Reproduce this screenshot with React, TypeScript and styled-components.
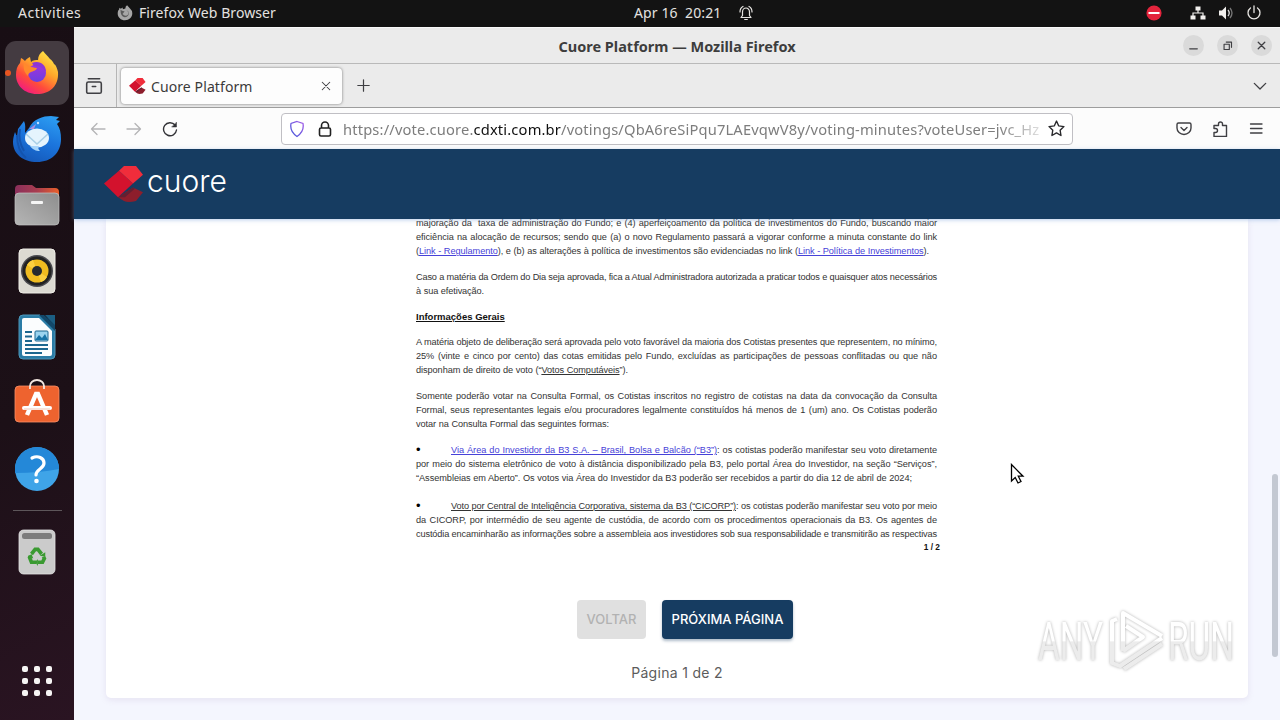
import React, { FC, ReactNode } from "react";
import styled, { createGlobalStyle } from "styled-components";

const GlobalStyle = createGlobalStyle`
  * {
    box-sizing: border-box;
  }
  body {
    margin: 0;
    overflow: hidden;
    font-family: "Noto Sans", "Open Sans", sans-serif;
  }
  svg {
    display: block;
    flex: none;
  }
`;

const Desktop = styled.div`
  position: relative;
  display: flex;
  flex-direction: column;
  width: 1280px;
  height: 720px;
  overflow: hidden;
  background-color: #1b1016;
`;

/* ---------- system bar ---------- */

const SystemBar = styled.header`
  display: grid;
  grid-template-columns: 634px 1fr auto;
  align-items: center;
  height: 27px;
  flex: none;
  padding-right: 18px;
  padding-bottom: 1px;
  background-color: #131313;
`;

const BarGroup = styled.div<{ $gap?: number; $left?: number }>`
  display: flex;
  align-items: center;
  gap: ${({ $gap }) => $gap || 0}px;
  padding-left: ${({ $left }) => $left || 0}px;
`;

const BarText = styled.span<{ $width: number; $spacing?: number }>`
  width: ${({ $width }) => $width}px;
  font-size: 14px;
  line-height: 26px;
  letter-spacing: ${({ $spacing }) => $spacing || 0}px;
  white-space: pre;
  color: #e4e2e0;
`;

/* ---------- dock ---------- */

const Workspace = styled.div`
  display: flex;
  flex: 1;
  min-height: 0;
`;

const Dock = styled.nav`
  display: flex;
  flex-direction: column;
  align-items: center;
  gap: 2px;
  width: 74px;
  flex: none;
  padding: 14px 0 7px;
  background: linear-gradient(155deg, #180e14 0%, #1c1017 55%, #2a1422 100%);
`;

const DockTile = styled.div<{ $active?: boolean }>`
  position: relative;
  display: flex;
  align-items: center;
  justify-content: center;
  width: 64px;
  height: 64px;
  flex: none;
  border-radius: 11px;
  background-color: ${({ $active }) => ($active ? "#443b41" : "transparent")};
`;

const RunningDot = styled.i`
  position: absolute;
  left: 0;
  top: 29px;
  width: 6px;
  height: 6px;
  border-radius: 50%;
  background-color: #e95420;
`;

const DockDivider = styled.hr`
  width: 49px;
  height: 1px;
  margin: 7px 0;
  border: 0;
  background-color: #5d565a;
`;

const AppsButton = styled.div`
  display: grid;
  grid-template-columns: repeat(3, 6px);
  gap: 6px;
  margin: auto 0 17px;
`;

const AppsDot = styled.i`
  width: 6px;
  height: 6px;
  border-radius: 2px;
  background-color: #f6f5f4;
`;

/* ---------- browser ---------- */

const Browser = styled.section`
  display: flex;
  flex-direction: column;
  flex: 1;
  min-width: 0;
  background-color: #ebebeb;
`;

const TitleBar = styled.div`
  display: grid;
  grid-template-columns: 1fr auto 1fr;
  align-items: center;
  height: 37px;
  flex: none;
  padding: 0 8px;
  border-bottom: 1px solid #b9b9b9;
  border-top: 1px solid #f8f8f8;
`;

const WindowTitle = styled.h1`
  grid-column: 2;
  margin: 0;
  font-size: 14.5px;
  font-weight: 700;
  color: #3d3d3d;
`;

const WindowButtons = styled.div`
  display: flex;
  justify-content: flex-end;
  gap: 13px;
`;

const WindowButton = styled.span`
  display: flex;
  align-items: center;
  justify-content: center;
  width: 21px;
  height: 21px;
  border-radius: 50%;
  background-color: #dadada;
`;

const TabStrip = styled.div`
  display: flex;
  align-items: center;
  height: 44px;
  flex: none;
  padding-right: 13px;
  border-bottom: 1px solid #9d9d9d;
`;

const TabHistory = styled.div`
  display: flex;
  align-items: center;
  padding: 0 13px 0 11px;
  height: 43px;
  width: 43px;
  border-right: 1px solid #b5b5b5;
`;

const Tab = styled.div`
  display: flex;
  align-items: center;
  width: 221px;
  height: 36px;
  margin-left: 4px;
  margin-right: 15px;
  padding: 0 10px 0 8px;
  border-radius: 4px;
  background-color: #fdfdfd;
  box-shadow: 0 0 3px rgba(0, 0, 0, 0.5);
`;

const TabTitle = styled.span`
  flex: 1;
  margin-left: 5px;
  padding-top: 1px;
  font-size: 14px;
  letter-spacing: 0.1px;
  color: #3a3a3a;
`;

const Spacer = styled.div`
  flex: 1;
`;

const Toolbar = styled.div`
  display: flex;
  align-items: center;
  height: 41px;
  flex: none;
  padding: 0 16px 0 16px;
  background-color: #fcfcfc;
`;

const NavButtons = styled.div`
  display: flex;
  gap: 20px;
  width: 191px;
`;

const AddressBar = styled.div`
  display: flex;
  align-items: center;
  width: 792px;
  height: 32px;
  padding: 0 7px;
  border: 1px solid #c0bfc4;
  border-radius: 4px;
  background-color: #fff;
`;

const Url = styled.div`
  width: 698px;
  margin-left: 10px;
  overflow: hidden;
  white-space: nowrap;
  font-size: 14.7px;
  letter-spacing: 0.16px;
  color: #7d7d7d;
  mask-image: linear-gradient(to right, #000 655px, transparent 710px);
`;

const UrlDomain = styled.span`
  color: #101010;
`;

const ToolButtons = styled.div`
  display: flex;
  gap: 20px;
`;

/* ---------- page ---------- */

const Page = styled.main`
  position: relative;
  display: flex;
  flex-direction: column;
  flex: 1;
  min-height: 0;
  background-color: #f4f6fe;
`;

const SiteHeader = styled.div`
  z-index: 1;
  display: flex;
  align-items: center;
  height: 70px;
  flex: none;
  padding-left: 30px;
  background-color: #163c61;
  box-shadow: 0 1px 4px rgba(120, 160, 215, 0.5);
`;

const Card = styled.article`
  display: flex;
  flex-direction: column;
  align-items: center;
  width: 1142px;
  height: 479px;
  margin-left: 32px;
  border-radius: 0 0 5px 5px;
  background-color: #fff;
  box-shadow: 0 2px 6px rgba(160, 130, 180, 0.16);
`;

const Minutes = styled.div`
  width: 522px;
  margin-top: -3px;
  font-family: "Liberation Sans", Arial, sans-serif;
  font-size: 9.2px;
  line-height: 14px;
  color: #333;
`;

const Paragraph = styled.div<{ $gap?: number }>`
  margin-bottom: ${({ $gap }) => $gap ?? 12}px;
`;

const Line = styled.div<{ $width?: number; $tight?: number }>`
  width: ${({ $width }) => $width || 521}px;
  height: 14px;
  letter-spacing: ${({ $tight }) => -($tight ?? 0.05)}px;
  white-space: nowrap;
  text-align: justify;
  text-align-last: justify;
`;

const Heading = styled.h2`
  width: 90px;
  height: 14px;
  margin: 0 0 11px;
  font-size: 9.5px;
  font-weight: 700;
  white-space: nowrap;
  text-decoration: underline;
  color: #111;
`;

const DocLink = styled.a`
  color: #4742d8;
  text-decoration: underline;
`;

const Term = styled.u`
  text-decoration-thickness: 1px;
`;

const BulletRow = styled.div`
  display: flex;
`;

const Bullet = styled.span`
  width: 35px;
  height: 14px;
  font-size: 13px;
  color: #000;
`;

const PageNumber = styled.div`
  margin-right: -2px;
  height: 12px;
  line-height: 12px;
  font-size: 8.3px;
  font-weight: 700;
  text-align: right;
  color: #111;
`;

const Pager = styled.div`
  display: flex;
  gap: 16px;
  margin-top: 47px;
  margin-left: 16px;
`;

const PagerButton = styled.button<{ $width: number; $muted?: boolean }>`
  width: ${({ $width }) => $width}px;
  height: 39px;
  padding: 0 0 2px;
  border: 0;
  border-radius: 4px;
  font-family: Inter, "Noto Sans", sans-serif;
  font-size: 13px;
  font-weight: 500;
  white-space: nowrap;
  color: ${({ $muted }) => ($muted ? "#b2b2b2" : "#fff")};
  background-color: ${({ $muted }) => ($muted ? "#e0e0e0" : "#163c61")};
  box-shadow: ${({ $muted }) =>
    $muted ? "none" : "0 2px 3px rgba(22, 60, 97, 0.35)"};
`;

const PageStatus = styled.p`
  margin: 24px 0 0;
  font-family: Inter, "Noto Sans", sans-serif;
  font-size: 14px;
  line-height: 20px;
  letter-spacing: 0.3px;
  color: #5c5c5c;
`;

const ScrollThumb = styled.div`
  position: absolute;
  right: 2px;
  top: 325px;
  width: 6px;
  height: 183px;
  border-radius: 3px;
  background-color: #c3c8d2;
`;

const Watermark = styled.svg`
  position: absolute;
  left: 1030px;
  top: 601px;
  filter: drop-shadow(0 0 1.5px rgba(0, 0, 0, 0.3));
`;

const Pointer = styled.svg`
  position: absolute;
  left: 1010px;
  top: 463px;
`;

/* ---------- icons ---------- */

interface StrokeProps {
  size?: number;
  color?: string;
  weight?: number;
  children: ReactNode;
}

const Stroke: FC<StrokeProps> = ({ size = 16, color = "#3f3f43", weight = 1.4, children }) => (
  <svg
    width={size}
    height={size}
    viewBox="0 0 16 16"
    fill="none"
    stroke={color}
    strokeWidth={weight}
    strokeLinecap="round"
    strokeLinejoin="round"
  >
    {children}
  </svg>
);

const FirefoxIcon: FC = () => (
  <svg width="44" height="46" viewBox="0 0 44 46">
    <defs>
      <linearGradient id="fx" x1="0.85" y1="0" x2="0.2" y2="1">
        <stop offset="0" stopColor="#fff04a" />
        <stop offset="0.4" stopColor="#ffa52a" />
        <stop offset="0.7" stopColor="#ff4b3b" />
        <stop offset="1" stopColor="#f0148c" />
      </linearGradient>
      <linearGradient id="fxCore" x1="0" y1="0" x2="0" y2="1">
        <stop offset="0" stopColor="#a333dc" />
        <stop offset="1" stopColor="#6a3fe0" />
      </linearGradient>
    </defs>
    <path
      d="M28 1c2 3 5 5 7 8 2 1 3 3 4 5 2 1 3 4 4 8 1 14-8 22-21 22C9 44 1 35 1 25c0-5 1-9 4-12l1-5c2 1 3 2 4 3 1-2 3-3 5-4l1 5c2-2 5-2 7-2 0-4 2-7 5-9z"
      fill="url(#fx)"
    />
    <circle cx="22" cy="23" r="9" fill="url(#fxCore)" />
    <path d="M17 13c7-3 14 1 14 9-3-5-7-6-12-6z" fill="#8d36d6" />
    <path d="M9 13c3 4 7 4 13 5-1 3-4 3-6 4-2 1-3 2-3 4-4-4-5-8-4-13z" fill="#ff8a2b" />
  </svg>
);

const ThunderbirdIcon: FC = () => (
  <svg width="50" height="48" viewBox="0 0 50 48">
    <defs>
      <linearGradient id="tb" x1="0.7" y1="0" x2="0.3" y2="1">
        <stop offset="0" stopColor="#2b9af0" />
        <stop offset="0.5" stopColor="#1b74dc" />
        <stop offset="1" stopColor="#1558b8" />
      </linearGradient>
    </defs>
    <path
      d="M17 13C21 4 31 1 39 1l8 1-3 3 4 1-3 3c3 4 4 9 4 15 0 14-10 23-24 23S1 39 1 27c0-4 1-7 2-10l2 5 1-8 6-8c2 4 1 8 1 12z"
      fill="url(#tb)"
    />
    <path d="M5 20c0 11 3 18 9 23M8 14c-2 10 1 17 4 22" stroke="#1454ae" strokeWidth="2" fill="none" />
    <ellipse cx="25" cy="23" rx="12" ry="9.5" fill="#e5f4fd" />
    <path d="M14 19l11 10 11-10" fill="none" stroke="#a9cfe6" strokeWidth="1.6" />
    <path d="M18 31c4 5 8 5 10 5-2-2-2-3-1-5z" fill="#a7d5fb" />
    <path d="M17 14l7-5-2 5z" fill="#a890e0" />
    <circle cx="26" cy="8" r="1.2" fill="#bfe1ff" />
  </svg>
);

const FilesIcon: FC = () => (
  <svg width="46" height="42" viewBox="0 0 46 42">
    <defs>
      <linearGradient id="fl" x1="0" x2="1">
        <stop offset="0" stopColor="#8a2f5b" />
        <stop offset="0.5" stopColor="#a83d50" />
        <stop offset="1" stopColor="#e9602b" />
      </linearGradient>
      <linearGradient id="flFront" x1="1" y1="0" x2="0" y2="1">
        <stop offset="0" stopColor="#8e8e8e" />
        <stop offset="1" stopColor="#b5b5b5" />
      </linearGradient>
    </defs>
    <path d="M1 5q0-4 4-4h13l4 3h19q4 0 4 4v14H1z" fill="url(#fl)" />
    <rect x="1" y="9" width="44" height="32" rx="4" fill="url(#flFront)" stroke="#c4c4c4" strokeWidth=".7" />
    <rect x="17" y="17" width="12" height="3" rx="1" fill="#f5f5f5" />
  </svg>
);

const MusicIcon: FC = () => (
  <svg width="38" height="46" viewBox="0 0 38 46">
    <rect x="1" y="1" width="36" height="44" rx="4" fill="#dcdad2" stroke="#efede6" />
    <circle cx="19" cy="23" r="16" fill="#4a4a4f" />
    <circle cx="19" cy="23" r="14.500" fill="#222" />
    <circle cx="19" cy="23" r="11.500" fill="#f0bc20" />
    <path d="M19 23L9 17q2-4 6-5zM19 23l10 6q-2 4-6 5z" fill="#fbcf40" />
    <circle cx="19" cy="23" r="5" fill="#252a30" />
  </svg>
);

const WriterIcon: FC = () => (
  <svg width="38" height="46" viewBox="0 0 38 46">
    <path d="M5 1h17l15 14v26q0 4-4 4H5q-4 0-4-4V5q0-4 4-4z" fill="#2a7ca6" stroke="#4c96b9" />
    <path d="M6 4h15l13 13v23q0 2-2 2H6q-2 0-2-2V6q0-2 2-2z" fill="#fbfdfe" />
    <path d="M27 1h10v11z" fill="#1b5e83" />
    <path d="M21 1h5l11 10v6z" fill="#12486a" />
    <path d="M7 18h7M7 22.500h7M7 27h7M7 31h23M7 35h23M7 39h17" stroke="#1c678f" strokeWidth="2" />
    <rect x="17" y="17" width="13" height="10" rx="1" fill="#9bd4ef" stroke="#1c678f" />
    <path d="M17 26l4-5 3 3 3-4 3 6z" fill="#1874a7" />
  </svg>
);

const StoreIcon: FC = () => (
  <svg width="46" height="50" viewBox="0 0 46 50">
    <rect x="1" y="8" width="44" height="36" rx="4" fill="#ee632f" stroke="#f99068" strokeWidth=".8" />
    <path d="M16 11V8a7 6 0 0 1 14 0v3" fill="none" stroke="#f3e7e0" strokeWidth="1.800" />
    <path d="M13 37l9-21h2l9 21" fill="none" stroke="#fff" strokeWidth="4.400" />
    <path d="M10 30h26" stroke="#fff" strokeWidth="4" strokeLinecap="round" />
    <path d="M10 31h26" stroke="#edb8a3" strokeWidth=".8" />
  </svg>
);

const HelpIcon: FC = () => (
  <svg width="46" height="46" viewBox="0 0 46 46">
    <circle cx="23" cy="23" r="22" fill="#3fa4e8" />
    <path d="M1 23a22 22 0 0 1 44 0q-20 4-44 4z" fill="#2488d8" />
    <path d="M18 12c6-3 12 0 12 5 0 6-8 6-8 12" fill="none" stroke="#fff" strokeWidth="3.200" strokeLinecap="round" />
    <circle cx="22.500" cy="35" r="2.300" fill="#fff" />
  </svg>
);

const TrashIcon: FC = () => (
  <svg width="38" height="46" viewBox="0 0 38 46">
    <rect x="1" y="1" width="36" height="44" rx="4.500" fill="#cbcbcb" stroke="#e3e3e3" strokeWidth=".8" />
    <rect x="4" y="4" width="30" height="6" rx="2.500" fill="#7c7c7c" />
    <g transform="translate(1.500 2) scale(.92)">
      <g fill="none" stroke="#3a9a31" strokeWidth="4">
        <path d="M13 25l4-5h3l4 5" />
        <path d="M12 27l-1 2 2 5h5" />
        <path d="M26 28l1 2-2 4h-5" />
      </g>
      <path d="M22 27l6-4v5zM20 30v8l-3-4zM9 28l4-3 2 5z" fill="#3a9a31" />
      <path d="M16 28l3-5 3 5-2 3h-2z" fill="#cbcbcb" />
    </g>
  </svg>
);

const CuoreMark: FC<{ width: number; height: number }> = ({ width, height }) => (
  <svg width={width} height={height} viewBox="0 0 40 37" preserveAspectRatio="none">
    <path d="M14 32L29 22l10 5-7 9q-8 2-12 0z" fill="#8d1e2c" />
    <path d="M14 32L29 22l2 1-10 9z" fill="#641f31" />
    <path d="M0 18L15 5l14 13-15 14z" fill="#d3122d" />
    <path d="M15 5l5-5h12l7 9-10 9z" fill="#f02d3b" />
  </svg>
);

const CuoreLogo: FC = () => (
  <svg width="150" height="44" viewBox="0 0 150 44">
    <g transform="translate(0 4)">
      <CuoreMark width={40} height={36} />
    </g>
    <text
      x="43"
      y="30"
      fontFamily="Inter, sans-serif"
      fontWeight="300"
      fontSize="31"
      textLength="80"
      lengthAdjust="spacingAndGlyphs"
      fill="#fff"
    >
      cuore
    </text>
  </svg>
);

const dockIcons = [ThunderbirdIcon, FilesIcon, MusicIcon, WriterIcon, StoreIcon, HelpIcon];

const App: FC = () => {
  return (
    <Desktop>
      <GlobalStyle />
      <SystemBar>
        <BarGroup $left={18}>
          <BarText $width={99} $spacing={0.5}>
            Activities
          </BarText>
          <svg width="16" height="16" viewBox="0 0 44 46">
            <path
              d="M28 1l9 10q6 5 6 13c0 12-9 20-21 20S1 35 1 25c0-5 1-9 4-12l1-5 4 3 5-4 1 5 7-2q0-6 5-9z"
              fill="#a6a6a6"
            />
            <path d="M9 14q6 5 12 4l-6 8q8 10 16 1 3-7-6-13 8 3 8 12-2 9-12 9-12-1-12-21z" fill="#5a5a5a" />
          </svg>
          <BarGroup $left={6}>
            <BarText $width={140} $spacing={0.08}>
              Firefox Web Browser
            </BarText>
          </BarGroup>
        </BarGroup>
        <BarGroup>
          <BarText $width={104} $spacing={0.1}>
            Apr 16  20:21
          </BarText>
          <Stroke color="#e8e6e3" weight={1.2}>
            <path d="M3 12.500h10l-1.500-2V7a3.500 4 0 0 0-7 0v3.500zM6.700 14.500h2.600M2 7q0-4 3-5.500M14 7q0-4-3-5.500" />
          </Stroke>
        </BarGroup>
        <BarGroup>
          <svg width="16" height="16" viewBox="0 0 16 16">
            <circle cx="8" cy="8" r="7.600" fill="#e3243c" />
            <path d="M2.500 8h11" stroke="#fff" strokeWidth="2" />
          </svg>
          <BarGroup $gap={12} $left={28}>
            <svg width="16" height="16" viewBox="0 0 16 16" fill="#f2f0ee">
              <path d="M5.500 1.500h5v4h-5zM.5 10.500h5v4h-5zM10.500 10.500h5v4h-5z" />
              <path d="M8 5v3M3 11V8h10v3" fill="none" stroke="#f2f0ee" strokeWidth="1.200" />
            </svg>
            <svg width="16" height="16" viewBox="0 0 16 16">
              <path d="M1 5.500h3l4-4v13l-4-4H1z" fill="#f2f0ee" />
              <path d="M10 5q2.500 3 0 6" stroke="#ddd" fill="none" strokeWidth="1.300" />
              <path d="M12 3q4 5 0 10" stroke="#777" fill="none" strokeWidth="1.300" />
            </svg>
            <Stroke color="#e8e6e3" weight={1.3}>
              <path d="M8 1v6.500M4.500 3a6 6 0 1 0 7 0" />
            </Stroke>
          </BarGroup>
        </BarGroup>
      </SystemBar>

      <Workspace>
        <Dock>
          <DockTile $active>
            <RunningDot />
            <FirefoxIcon />
          </DockTile>
          {dockIcons.map((Icon, index) => (
            <DockTile key={index}>
              <Icon />
            </DockTile>
          ))}
          <DockDivider />
          <DockTile>
            <TrashIcon />
          </DockTile>
          <AppsButton>
            {Array.from({ length: 9 }, (_, index) => (
              <AppsDot key={index} />
            ))}
          </AppsButton>
        </Dock>

        <Browser>
          <TitleBar>
            <WindowTitle>Cuore Platform — Mozilla Firefox</WindowTitle>
            <WindowButtons>
              <WindowButton>
                <Stroke size={15}>
                  <path d="M4 11.500h8" />
                </Stroke>
              </WindowButton>
              <WindowButton>
                <Stroke size={14} weight={1.3}>
                  <path d="M3.500 6h6v6h-6zM6 3.500h6v6" />
                </Stroke>
              </WindowButton>
              <WindowButton>
                <Stroke size={15}>
                  <path d="M4.500 4.500l7 7M11.500 4.500l-7 7" />
                </Stroke>
              </WindowButton>
            </WindowButtons>
          </TitleBar>

          <TabStrip>
            <TabHistory>
              <Stroke size={18}>
                <path d="M3 1.500h10M1.500 6q0-1.500 1.500-1.500h10q1.500 0 1.500 1.500v7q0 1.500-1.500 1.500H3Q1.500 14.500 1.500 13zM6.500 8.500h3" />
              </Stroke>
            </TabHistory>
            <Tab>
              <CuoreMark width={17} height={16} />
              <TabTitle>Cuore Platform</TabTitle>
              <Stroke size={12} weight={1.4}>
                <path d="M3 3l10 10M13 3L3 13" />
              </Stroke>
            </Tab>
            <Stroke size={13} weight={1.5}>
              <path d="M8 1v14M1 8h14" />
            </Stroke>
            <Spacer />
            <Stroke size={14} weight={1.5}>
              <path d="M1.500 5L8 11.500 14.500 5" />
            </Stroke>
          </TabStrip>

          <Toolbar>
            <NavButtons>
              <Stroke color="#b4b4b6" weight={1.3}>
                <path d="M15 8H1.500M7 2.500L1.500 8 7 13.500" />
              </Stroke>
              <Stroke color="#b4b4b6" weight={1.3}>
                <path d="M1 8h13.500M9 2.500L14.500 8 9 13.500" />
              </Stroke>
              <Stroke color="#333337" weight={1.4}>
                <path d="M13 4A6.500 6.500 0 1 0 14.500 9" />
                <path d="M14.500 1.500v4.500H10z" fill="#333337" strokeWidth=".5" />
              </Stroke>
            </NavButtons>
            <AddressBar>
              <svg width="16" height="18" viewBox="0 0 16 18">
                <defs>
                  <linearGradient id="shield" x1="0" y1="1" x2="1" y2="0">
                    <stop offset="0" stopColor="#4257d8" />
                    <stop offset="1" stopColor="#a35be8" />
                  </linearGradient>
                </defs>
                <path d="M8 1.500l6 2q1.500 8-6 13-7.500-5-6-13z" fill="none" stroke="url(#shield)" strokeWidth="1.300" />
              </svg>
              <BarGroup $left={12}>
                <Stroke color="#222" weight={1.6}>
                  <path d="M2.500 8.500q0-1.500 1.500-1.500h8q1.500 0 1.500 1.500v5q0 1.500-1.500 1.500H4q-1.500 0-1.500-1.500zM4.500 7V4.500a3.500 3.500 0 0 1 7 0V7" />
                </Stroke>
              </BarGroup>
              <Url>
                https://vote.cuore.<UrlDomain>cdxti.com.br</UrlDomain>
                /votings/QbA6reSiPqu7LAEvqwV8y/voting-minutes?voteUser=jvc_Hz
              </Url>
              <BarGroup $left={7}>
                <Stroke size={17} color="#28282b" weight={1.3}>
                  <path d="M8 1l2 4.500 5 .7-3.600 3.400.8 5L8 12.200l-4.300 2.400.8-5L1 6.200l5-.7z" />
                </Stroke>
              </BarGroup>
            </AddressBar>
            <Spacer />
            <ToolButtons>
              <Stroke>
                <path d="M2.500 2h11q1.500 0 1.500 1.500V7a7 6.500 0 0 1-14 0V3.500Q1 2 2.500 2zM5 6.500L8 9.500l3-3" />
              </Stroke>
              <Stroke>
                <path d="M2 15.500h12.500V4.500h-4V3a2 2 0 0 0-4 0v1.500H2v3h1.500a1.900 1.900 0 0 1 0 4H2z" />
              </Stroke>
              <Stroke weight={1.3}>
                <path d="M2.500 3h11.500M2.500 7.500h11.500M2.500 12h11.500" />
              </Stroke>
            </ToolButtons>
          </Toolbar>

          <Page>
            <SiteHeader>
              <CuoreLogo />
            </SiteHeader>
            <Card>
              <Minutes>
                <Paragraph>
                  <Line>
                    majoração da&nbsp; taxa de administração do Fundo; e (4) aperfeiçoamento da política de
                    investimentos do Fundo, buscando maior
                  </Line>
                  <Line>
                    eficiência na alocação de recursos; sendo que (a) o novo Regulamento passará a vigorar conforme a
                    minuta constante do link
                  </Line>
                  <Line $width={513} $tight={0.07}>
                    (<DocLink>Link - Regulamento</DocLink>), e (b) as alterações à política de investimentos são
                    evidenciadas no link (<DocLink>Link - Política de Investimentos</DocLink>).
                  </Line>
                </Paragraph>
                <Paragraph>
                  <Line $tight={0.17}>
                    Caso a matéria da Ordem do Dia seja aprovada, fica a Atual Administradora autorizada a praticar
                    todos e quaisquer atos necessários
                  </Line>
                  <Line $width={68} $tight={0.12}>
                    à sua efetivação.
                  </Line>
                </Paragraph>
                <Heading>Informações Gerais</Heading>
                <Paragraph>
                  <Line $tight={0.12}>
                    A matéria objeto de deliberação será aprovada pelo voto favorável da maioria dos Cotistas presentes
                    que representem, no mínimo,
                  </Line>
                  <Line>
                    25% (vinte e cinco por cento) das cotas emitidas pelo Fundo, excluídas as participações de pessoas
                    conflitadas ou que não
                  </Line>
                  <Line $width={212} $tight={0.07}>
                    disponham de direito de voto (“<Term>Votos Computáveis</Term>”).
                  </Line>
                </Paragraph>
                <Paragraph>
                  <Line>
                    Somente poderão votar na Consulta Formal, os Cotistas inscritos no registro de cotistas na data da
                    convocação da Consulta
                  </Line>
                  <Line>
                    Formal, seus representantes legais e/ou procuradores legalmente constituídos há menos de 1 (um)
                    ano. Os Cotistas poderão
                  </Line>
                  <Line $width={193} $tight={0.08}>
                    votar na Consulta Formal das seguintes formas:
                  </Line>
                </Paragraph>
                <Paragraph $gap={14}>
                  <BulletRow>
                    <Bullet>•</Bullet>
                    <Line $width={486}>
                      <DocLink>Via Área do Investidor da B3 S.A. – Brasil, Bolsa e Balcão (“B3”)</DocLink>: os cotistas
                      poderão manifestar seu voto diretamente
                    </Line>
                  </BulletRow>
                  <Line>
                    por meio do sistema eletrônico de voto à distância disponibilizado pela B3, pelo portal Área do
                    Investidor, na seção “Serviços”,
                  </Line>
                  <Line $width={496}>
                    “Assembleias em Aberto”. Os votos via Área do Investidor da B3 poderão ser recebidos a partir do
                    dia 12 de abril de 2024;
                  </Line>
                </Paragraph>
                <Paragraph $gap={0}>
                  <BulletRow>
                    <Bullet>•</Bullet>
                    <Line $width={486} $tight={0.12}>
                      <Term>Voto por Central de Inteligência Corporativa, sistema da B3 (“CICORP”)</Term>: os cotistas
                      poderão manifestar seu voto por meio
                    </Line>
                  </BulletRow>
                  <Line>
                    da CICORP, por intermédio de seu agente de custódia, de acordo com os procedimentos operacionais da
                    B3. Os agentes de
                  </Line>
                  <Line $tight={0.14}>
                    custódia encaminharão as informações sobre a assembleia aos investidores sob sua responsabilidade e
                    transmitirão as respectivas
                  </Line>
                </Paragraph>
                <PageNumber>1 / 2</PageNumber>
              </Minutes>
              <Pager>
                <PagerButton $width={69} $muted>
                  VOLTAR
                </PagerButton>
                <PagerButton $width={131}>PRÓXIMA PÁGINA</PagerButton>
              </Pager>
              <PageStatus>Página 1 de 2</PageStatus>
            </Card>
            <ScrollThumb />
          </Page>
        </Browser>
      </Workspace>

      <Watermark width="240" height="80" viewBox="0 0 240 80">
        <defs>
          <linearGradient id="wm" gradientUnits="userSpaceOnUse" x1="0" y1="0" x2="0" y2="80">
            <stop offset="0.5" stopColor="#fff" />
            <stop offset="0.51" stopColor="#ececec" />
          </linearGradient>
        </defs>
        <g fontFamily="Roboto, sans-serif" fontSize="53" fill="url(#wm)">
          <text x="8" y="59" textLength="65" lengthAdjust="spacingAndGlyphs">
            ANY
          </text>
          <text x="138" y="59" textLength="66" lengthAdjust="spacingAndGlyphs">
            RUN
          </text>
        </g>
        <g fill="none" stroke="url(#wm)" strokeWidth="4" strokeLinejoin="round">
          <path d="M93 50V12l39 23M132 43L94 68" />
          <path d="M87 18l-5 2v42l8 3 42-28" />
          <path d="M93 50l20-14-17-11" />
        </g>
      </Watermark>
      <Pointer width="16" height="22" viewBox="0 0 16 22">
        <path
          d="M1.500 1.500v16.500l3.700-3.500 2.800 5.500 3-1.500-2.700-5.300h4.700z"
          fill="#fff"
          stroke="#000"
          strokeWidth="1.300"
        />
      </Pointer>
    </Desktop>
  );
};

export default App;
